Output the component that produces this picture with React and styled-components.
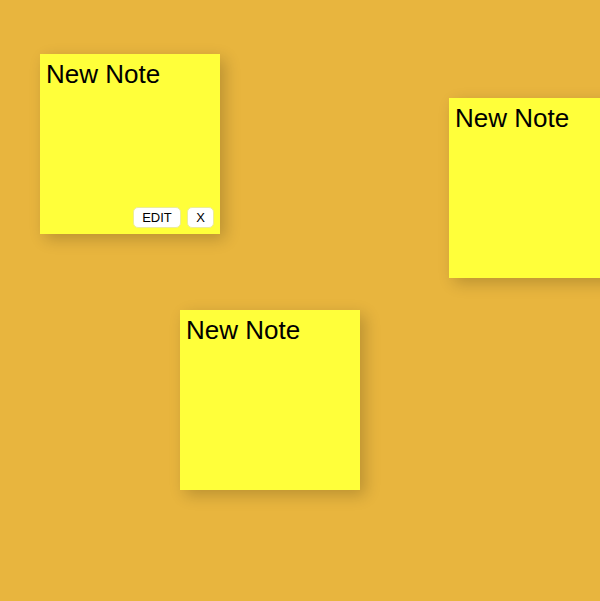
import React from 'react';
import styled, { createGlobalStyle } from 'styled-components';

const GlobalStyle = createGlobalStyle`
  html, body {
    margin: 0;
    padding: 0;
    background: #e8b53e;
    font-family: "Liberation Sans", Arial, sans-serif;
  }
`;

export const Board = styled.div`
  position: relative;
  width: 600px;
  height: 601px;
  overflow: hidden;
  background: #e8b53e;
`;

export const Note = styled.div`
  position: absolute;
  width: 180px;
  height: 180px;
  background: #ffff3a;
  box-shadow: 5px 5px 15px 0 rgba(0, 0, 0, 0.2);
  display: flex;
  flex-direction: column;
  justify-content: space-between;
  box-sizing: border-box;
  padding: 5px 6px 6px 6px;

  & p {
    margin: 0;
    font-size: 26px;
    line-height: 30px;
    color: #000;
  }
`;

export const Actions = styled.div`
  display: flex;
  justify-content: flex-end;
  gap: 6px;
`;

export const Button = styled.button`
  height: 21px;
  width: ${(p) => (p.$wide ? '48px' : '27px')};
  padding: 0;
  background: #fff;
  border: 1px solid #ecec9a;
  border-radius: 5px;
  font-family: "Liberation Sans", Arial, sans-serif;
  font-size: 13px;
  color: #000;
  line-height: 19px;
  cursor: pointer;
`;

const notes = [
  { id: 1, x: 40, y: 54, active: true },
  { id: 2, x: 449, y: 98 },
  { id: 3, x: 180, y: 310 },
];

const App = () => (
  <>
    <GlobalStyle />
    <Board>
      {notes.map((n) => (
        <Note key={n.id} style={{ left: n.x, top: n.y }}>
          <p>New Note</p>
          {n.active && (
            <Actions>
              <Button $wide>EDIT</Button>
              <Button>X</Button>
            </Actions>
          )}
        </Note>
      ))}
    </Board>
  </>
);

export default App;
